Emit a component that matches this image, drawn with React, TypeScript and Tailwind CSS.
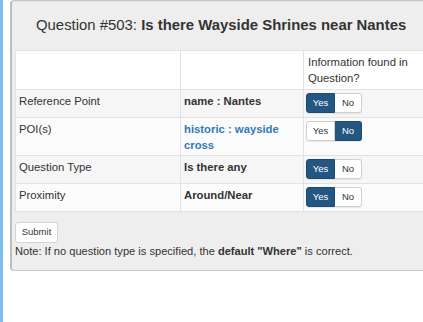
import React from "react";

function Toggle({ yes }: { yes: boolean }) {
  return (
    <div className="inline-flex h-[20px] text-[9.5px] leading-none rounded-[3px] shadow-[0_1px_1px_rgba(0,0,0,0.08)]">
      <span
        className={
          yes
            ? "flex w-[29px] items-center justify-center rounded-l-[3px] border border-[#1d4a72] bg-[#245682] text-white"
            : "flex w-[29px] items-center justify-center rounded-l-[3px] border border-[#d0d0d0] bg-white text-[#333]"
        }
      >
        Yes
      </span>
      <span
        className={
          !yes
            ? "flex w-[27px] items-center justify-center rounded-r-[3px] border border-l-0 border-[#1d4a72] bg-[#245682] text-white"
            : "flex w-[27px] items-center justify-center rounded-r-[3px] border border-l-0 border-[#d0d0d0] bg-white text-[#333]"
        }
      >
        No
      </span>
    </div>
  );
}

export default function App() {
  const rows = [
    { label: "Reference Point", value: "name : Nantes", link: false, yes: true, h: "h-[28px]" },
    { label: "POI(s)", value: "historic : wayside cross", link: true, yes: false, h: "h-[38px]" },
    { label: "Question Type", value: "Is there any", link: false, yes: true, h: "h-[28px]" },
    { label: "Proximity", value: "Around/Near", link: false, yes: true, h: "h-[28px]" },
  ];
  return (
    <div
      className="relative flex h-[322px] w-[423px] overflow-hidden bg-white text-[#333]"
      style={{ fontFamily: '"Liberation Sans", Arial, sans-serif' }}
    >
      <div className="w-[3px] shrink-0 bg-[#7dbdee]" />
      <div className="ml-[7px] h-[271px] w-[460px] shrink-0 rounded-[4px] border border-[#c8c8c8] border-l-2 border-l-[#bdbdbd] bg-[#eeeeee] shadow-[inset_0_1px_1px_rgba(0,0,0,0.05)]">
        <h3 className="whitespace-nowrap pl-[24px] pt-[12px] text-[14.9px] leading-[24px] text-[#333]">
          Question #503: <b>Is there Wayside Shrines near Nantes</b>
        </h3>
        <table className="ml-[3px] mt-[13px] w-[450px] border-collapse text-[11.3px] leading-[16px]">
          <colgroup>
            <col className="w-[165px]" />
            <col className="w-[123px]" />
            <col />
          </colgroup>
          <thead>
            <tr className="h-[39px] bg-white">
              <th className="border border-[#e2e2e2]" />
              <th className="border border-[#e2e2e2]" />
              <th className="border border-[#e2e2e2] px-[4px] pt-[3px] pb-[2px] text-left align-top font-normal">
                Information found in
                <br />
                Question?
              </th>
            </tr>
          </thead>
          <tbody>
            {rows.map((r, i) => (
              <tr key={r.label} className={(i % 2 === 0 ? "bg-[#f6f6f6] " : "bg-[#fbfbfb] ") + r.h}>
                <td className="border border-[#e2e2e2] px-[3px] pt-[3px] align-top">{r.label}</td>
                <td
                  className={
                    "border border-[#e2e2e2] px-[3px] pt-[3px] align-top font-bold " +
                    (r.link ? "text-[#337ab7]" : "text-[#333]")
                  }
                >
                  {r.link ? (
                    <>
                      historic : wayside
                      <br />
                      cross
                    </>
                  ) : (
                    r.value
                  )}
                </td>
                <td className="border border-[#e2e2e2] px-[2px] pt-[3px] align-top">
                  <Toggle yes={r.yes} />
                </td>
              </tr>
            ))}
          </tbody>
        </table>
        <button className="ml-[3px] mt-[10px] h-[21px] w-[43px] rounded-[3px] border border-[#d4d4d4] bg-white text-[9.5px] text-[#333]">
          Submit
        </button>
        <p className="ml-[3px] whitespace-nowrap text-[11.1px] leading-[16px]">
          Note: If no question type is specified, the <b>default "Where"</b> is correct.
        </p>
      </div>
    </div>
  );
}
